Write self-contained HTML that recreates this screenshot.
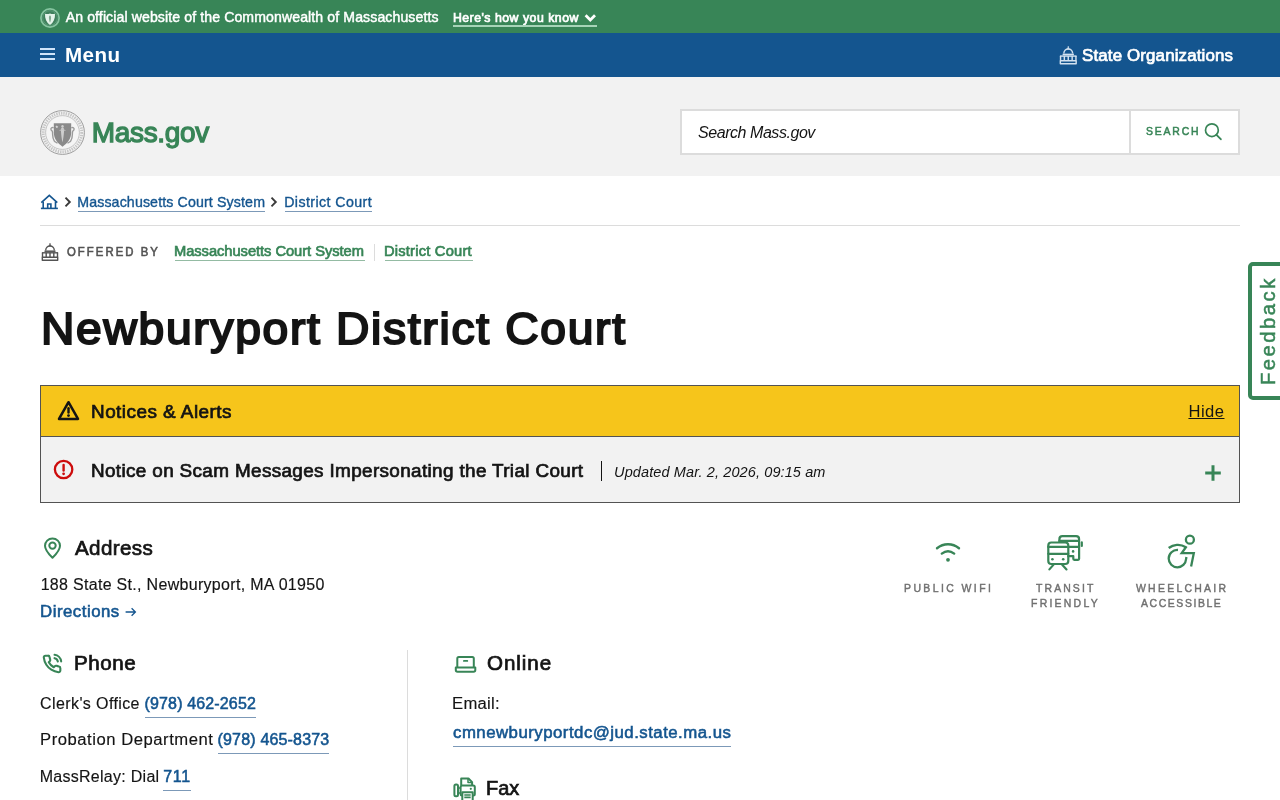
<!DOCTYPE html>
<html lang="en">
<head>
<meta charset="utf-8">
<title>Newburyport District Court | Mass.gov</title>
<style>
*{box-sizing:border-box}
html,body{margin:0;padding:0}
body{width:1280px;height:800px;overflow:hidden;background:#fff;font-family:"Liberation Sans",sans-serif;color:#141414}
#page{position:relative;width:1280px;height:800px;overflow:hidden;will-change:transform}
.t{position:absolute;white-space:nowrap;line-height:1;margin:0;padding:0;text-decoration:none;display:block}
.abs{position:absolute}
svg{position:absolute;overflow:visible}
.banner{position:absolute;left:0;top:0;width:1280px;height:33px;background:#388557}
.mainnav{position:absolute;left:0;top:33px;width:1280px;height:44px;background:#14558f}
.masthead{position:absolute;left:0;top:77px;width:1280px;height:99px;background:#f2f2f2}
.searchbox{position:absolute;left:680px;top:109px;width:560px;height:46px;background:#fff;border:2px solid #dcdcdc}
.searchdiv{position:absolute;left:1129px;top:109px;width:2px;height:46px;background:#dcdcdc}
.hr{position:absolute;left:40px;top:225px;width:1200px;height:1px;background:#dcdcdc}
.ul{position:absolute;height:1px}
.alerts{position:absolute;left:40px;top:385px;width:1200px;height:118px;border:1px solid #535353;background:#f2f2f2}
.alerts-head{position:absolute;left:0;top:0;width:1198px;height:51px;background:#f6c51b;border-bottom:1px solid #535353}
.vsep{position:absolute;width:1px}
.feedback{position:absolute;left:1248px;top:262px;width:40px;height:138px;border:4px solid #388557;border-radius:5px;background:#fff}
.feedback span{position:absolute;white-space:nowrap;line-height:1;transform-origin:0 0;transform:rotate(-90deg);color:#388557}
#official{left:65.7px;top:9.78px;font-size:14.1px;font-weight:400;color:#fff;letter-spacing:0.104px;-webkit-text-stroke:0.45px #fff;}
#heres{left:452.89px;top:11.65px;font-size:12.3px;font-weight:400;color:#fff;letter-spacing:0.499px;-webkit-text-stroke:0.7px #fff;}
#menu{left:64.99px;top:11.75px;font-size:20.6px;font-weight:700;color:#fff;letter-spacing:0.412px;}
#stateorg{left:1082.01px;top:14.65px;font-size:16.9px;font-weight:400;color:#fff;letter-spacing:0.145px;-webkit-text-stroke:0.7px #fff;}
#massgov{left:91.72px;top:42.35px;font-size:28px;font-weight:400;color:#388557;letter-spacing:-0.316px;-webkit-text-stroke:1.3px #388557;}
#searchph{left:698.06px;top:124.8px;font-size:16px;font-weight:400;color:#141414;letter-spacing:-0.452px;font-style:italic;}
#searchbtn{left:1145.76px;top:125.12px;font-size:11.6px;font-weight:400;color:#388557;letter-spacing:2.007px;-webkit-text-stroke:0.55px #388557;transform-origin:0 50%;transform:scaleX(0.9);}
#bc1{left:77.2px;top:194.82px;font-size:14.2px;font-weight:400;color:#14558f;letter-spacing:0.131px;-webkit-text-stroke:0.35px #14558f;}
#bc2{left:284.2px;top:194.82px;font-size:14.2px;font-weight:400;color:#14558f;letter-spacing:0.423px;-webkit-text-stroke:0.35px #14558f;}
#offby{left:67.13px;top:246.45px;font-size:12.2px;font-weight:400;color:#535353;letter-spacing:2.207px;-webkit-text-stroke:0.6px #535353;transform-origin:0 50%;transform:scaleX(0.93);}
#ob1{left:174.42px;top:244.43px;font-size:14px;font-weight:400;color:#388557;letter-spacing:-0.049px;-webkit-text-stroke:0.65px #388557;transform-origin:0 50%;transform:scaleX(1.05);}
#ob2{left:384.32px;top:244.43px;font-size:14px;font-weight:400;color:#388557;letter-spacing:0.192px;-webkit-text-stroke:0.65px #388557;transform-origin:0 50%;transform:scaleX(1.05);}
#h1{left:40.52px;top:306.5px;font-size:44px;font-weight:400;color:#141414;letter-spacing:1.61px;-webkit-text-stroke:2px #141414;transform-origin:0 50%;transform:scaleX(1.05);}
#notices{left:91.3px;top:402.9px;font-size:18px;font-weight:400;color:#141414;letter-spacing:0.454px;-webkit-text-stroke:0.7px #141414;transform-origin:0 50%;transform:scaleX(1.05);}
#hide{left:1188.45px;top:404.4px;font-size:16.6px;font-weight:400;color:#141414;letter-spacing:0.475px;text-decoration:underline;}
#alerttitle{left:91.3px;top:461.65px;font-size:18px;font-weight:400;color:#141414;letter-spacing:0.335px;-webkit-text-stroke:0.7px #141414;transform-origin:0 50%;transform:scaleX(1.05);}
#updated{left:614.12px;top:465px;font-size:14.5px;font-weight:400;color:#141414;letter-spacing:0.106px;font-style:italic;}
#address{left:74.62px;top:538.65px;font-size:19.6px;font-weight:400;color:#141414;letter-spacing:0.354px;-webkit-text-stroke:0.7px #141414;transform-origin:0 50%;transform:scaleX(1.05);}
#addrline{left:40.64px;top:576.92px;font-size:16px;font-weight:400;color:#141414;letter-spacing:0.305px;-webkit-text-stroke:0.15px #141414;}
#directions{left:40.26px;top:603.73px;font-size:16px;font-weight:400;color:#14558f;letter-spacing:0.483px;-webkit-text-stroke:0.55px #14558f;transform-origin:0 50%;transform:scaleX(1.05);}
#phone{left:73.99px;top:654.35px;font-size:19.6px;font-weight:400;color:#141414;letter-spacing:0.545px;-webkit-text-stroke:0.7px #141414;transform-origin:0 50%;transform:scaleX(1.05);}
#clerk{left:40.1px;top:695.92px;font-size:16px;font-weight:400;color:#141414;letter-spacing:0.391px;-webkit-text-stroke:0.15px #141414;}
#ph1{left:144.53px;top:695.73px;font-size:16px;font-weight:400;color:#14558f;letter-spacing:0.147px;-webkit-text-stroke:0.55px #14558f;}
#prob{left:39.7px;top:731.92px;font-size:16px;font-weight:400;color:#141414;letter-spacing:0.513px;-webkit-text-stroke:0.15px #141414;transform-origin:0 50%;transform:scaleX(1.04);}
#ph2{left:217.53px;top:731.73px;font-size:16px;font-weight:400;color:#14558f;letter-spacing:0.178px;-webkit-text-stroke:0.55px #14558f;}
#relay{left:39.66px;top:768.92px;font-size:16px;font-weight:400;color:#141414;letter-spacing:0.278px;-webkit-text-stroke:0.15px #141414;}
#ph3{left:163.13px;top:768.73px;font-size:16px;font-weight:400;color:#14558f;letter-spacing:0.788px;-webkit-text-stroke:0.55px #14558f;}
#online{left:486.93px;top:654.35px;font-size:19.6px;font-weight:400;color:#141414;letter-spacing:0.897px;-webkit-text-stroke:0.7px #141414;transform-origin:0 50%;transform:scaleX(1.05);}
#emaillbl{left:451.8px;top:695.92px;font-size:16px;font-weight:400;color:#141414;letter-spacing:0.287px;-webkit-text-stroke:0.15px #141414;transform-origin:0 50%;transform:scaleX(1.04);}
#email{left:452.8px;top:724.73px;font-size:16px;font-weight:400;color:#14558f;letter-spacing:0.455px;-webkit-text-stroke:0.55px #14558f;transform-origin:0 50%;transform:scaleX(1.05);}
#fax{left:486.22px;top:779.35px;font-size:19.6px;font-weight:400;color:#141414;letter-spacing:-0.049px;-webkit-text-stroke:0.7px #141414;transform-origin:0 50%;transform:scaleX(1.02);}
#wifi1{left:904.31px;top:582.17px;font-size:11.6px;font-weight:400;color:#707070;letter-spacing:2.69px;-webkit-text-stroke:0.45px #707070;transform-origin:0 50%;transform:scaleX(0.9);}
#tr1{left:1035.87px;top:582.17px;font-size:11.6px;font-weight:400;color:#707070;letter-spacing:2.348px;-webkit-text-stroke:0.45px #707070;transform-origin:0 50%;transform:scaleX(0.9);}
#tr2{left:1031.21px;top:597.38px;font-size:11.6px;font-weight:400;color:#707070;letter-spacing:2.515px;-webkit-text-stroke:0.45px #707070;transform-origin:0 50%;transform:scaleX(0.9);}
#wc1{left:1136.47px;top:582.17px;font-size:11.6px;font-weight:400;color:#707070;letter-spacing:2.524px;-webkit-text-stroke:0.45px #707070;transform-origin:0 50%;transform:scaleX(0.9);}
#wc2{left:1141.43px;top:597.38px;font-size:11.6px;font-weight:400;color:#707070;letter-spacing:1.764px;-webkit-text-stroke:0.45px #707070;transform-origin:0 50%;transform:scaleX(0.9);}
#fb{left:1258.15px;top:384.6px;font-size:20.3px;font-weight:400;color:#388557;letter-spacing:2.457px;-webkit-text-stroke:0.5px #388557;transform-origin:0 0;transform:rotate(-90deg);}
</style>
</head>
<body>
<div id="page">
<header>
  <div class="banner">
    <svg style="left:40px;top:8px" width="20" height="20" viewBox="0 0 20 20" aria-hidden="true" ><circle cx="10" cy="10" r="9.100" fill="#3f7f5c" stroke="#86c4a0" stroke-width="1.700"/><circle cx="10" cy="10" r="7.300" fill="none" stroke="#5da27c" stroke-width=".8"/><path d="M5 5.700c1.700.5 3.300.5 5-.3 1.700.8 3.300.8 5 .3.300 4.800-1.500 8.800-5 11.300C6.500 14.500 4.700 10.500 5 5.700z" fill="#e4f3ea"/><path d="M10 7.600c.9 0 1.200 1.600 1 3.200-.2 1.500-.5 3-1 3.900-.5-.9-.8-2.400-1-3.900-.2-1.600.1-3.200 1-3.200z" fill="#7fa890"/></svg>
    <span id="official" class="t">An official website of the Commonwealth of Massachusetts</span>
    <a id="heres" class="t" href="#">Here's how you know</a>
    <div class="ul" style="left:453px;top:25px;width:144px;height:2px;background:#a6d4b8"></div>
    <svg style="left:584px;top:13px" width="13" height="10" viewBox="0 0 13 10" aria-hidden="true" ><path d="M1.600 2.200L6.300 6.900L11 2.200" fill="none" stroke="#fff" stroke-width="2.800" stroke-linecap="butt"/></svg>
  </div>
  <nav class="mainnav" style="position:absolute">
    <svg style="left:40px;top:15px" width="15" height="12" viewBox="0 0 15 12" aria-hidden="true" ><path d="M0 0h15v2H0zM0 5h15v2H0zM0 10h15v2H0z" fill="#cfe4fa"/></svg>
    <span id="menu" class="t">Menu</span>
    <svg style="left:1059.3px;top:13.3px" width="18.5" height="18.5" viewBox="0 0 18 18" aria-hidden="true" ><g fill="none" stroke="#d3e2f0" stroke-width="1.400" stroke-linejoin="round"><path d="M9 0.200L9.700 3H8.300z" fill="#d3e2f0" stroke-width=".6"/><path d="M4.700 7.400c0-2.600 1.900-4.400 4.300-4.400s4.300 1.800 4.300 4.400"/><path d="M3.500 8.200h11" stroke-width="1.500"/><path d="M0.900 9.800h16.200"/><path d="M1.500 9.800v4.400M5.200 9.800v4.400M9 9.800v4.400M12.800 9.800v4.400M16.500 9.800v4.400"/><path d="M1.300 14.300h15.400v3h-15.400z"/></g></svg>
    <span id="stateorg" class="t">State Organizations</span>
  </nav>
  <div class="masthead">
    <svg style="left:40px;top:33px" width="45" height="45" viewBox="0 0 45 45" aria-hidden="true" ><circle cx="22.500" cy="22.500" r="21.900" fill="#f4f4f4" stroke="#9c9c9c" stroke-width="1"/><circle cx="22.500" cy="22.500" r="19.300" fill="none" stroke="#c6c6c6" stroke-width="3" stroke-dasharray="1.400 1"/><circle cx="22.500" cy="22.500" r="16.900" fill="#f5f5f5" stroke="#b8b8b8" stroke-width=".8"/><path d="M13.600 17.800c-1.500-.8-3 .2-2.600 1.700.3 1 1.300 1.200 1.500 2.500.3 3-.3 6 1.700 8.800.8 1.200 2.200 1.600 3.300 2.400M31.400 17.800c1.500-.8 3 .2 2.600 1.700-.3 1-1.300 1.200-1.500 2.500-.3 3 .3 6-1.700 8.800-.8 1.200-2.200 1.600-3.300 2.400" fill="none" stroke="#9a9a9a" stroke-width="1.400"/><path d="M13.800 13.200h17.400v9.300c0 6.500-4 10.700-8.700 14.200-4.700-3.500-8.700-7.700-8.700-14.200z" fill="#8a8a8a"/><path d="M22.500 17.300c1.300 0 1.700 2 1.500 4.500-.2 3-.7 7.500-1.500 10.700-.8-3.200-1.300-7.700-1.500-10.700-.2-2.500.2-4.500 1.500-4.500z" fill="#cfcfcf"/><circle cx="22.500" cy="16.300" r="1.200" fill="#cfcfcf"/><path d="M19.600 20.500l2.900-1 2.900 1" stroke="#c4c4c4" stroke-width="1" fill="none"/><path d="M16.800 15.200l.45 1.050 1.100.1-.85.750.25 1.100-.95-.6-.95.600.25-1.100-.85-.75 1.100-.1z" fill="#dedede"/></svg>
    <span id="massgov" class="t">Mass.gov</span>
  </div>
  <form class="searchbox" role="search"></form>
  <div class="searchdiv"></div>
  <span id="searchph" class="t">Search Mass.gov</span>
  <span id="searchbtn" class="t">SEARCH</span>
  <svg style="left:1204px;top:123px" width="18" height="18" viewBox="0 0 18 18" aria-hidden="true" ><circle cx="7.900" cy="7.200" r="6.400" fill="none" stroke="#388557" stroke-width="1.700"/><path d="M12.500 11.800L16.800 16.200" stroke="#388557" stroke-width="1.900" stroke-linecap="round"/></svg>
</header>
<main>
  <nav aria-label="Breadcrumb">
    <svg style="left:40px;top:193px" width="19" height="17" viewBox="0 0 19 17" aria-hidden="true" ><g fill="none" stroke="#14558f" stroke-width="1.600" stroke-linejoin="miter"><path d="M1.300 9.700L9.300 2.300L17.300 9.700"/><path d="M3.200 8.700v6.500M15.500 8.700v6.500"/><path d="M0.900 15.400h17"/><path d="M7.700 15v-4h3.200v4"/></g></svg>
    <svg style="left:63.9px;top:196px" width="8" height="12" viewBox="0 0 8 12" aria-hidden="true" ><path d="M1.500 1.700L5.800 6L1.500 10.300" fill="none" stroke="#3a3a3a" stroke-width="1.900"/></svg>
    <a id="bc1" class="t" href="#">Massachusetts Court System</a>
    <div class="ul" style="left:78px;top:211px;width:187px;background:#7c99b8"></div>
    <svg style="left:270.4px;top:196px" width="8" height="12" viewBox="0 0 8 12" aria-hidden="true" ><path d="M1.500 1.700L5.800 6L1.500 10.300" fill="none" stroke="#3a3a3a" stroke-width="1.900"/></svg>
    <a id="bc2" class="t" href="#">District Court</a>
    <div class="ul" style="left:285px;top:211px;width:87px;background:#7c99b8"></div>
  </nav>
  <div class="hr"></div>
  <div class="offered">
    <svg style="left:41.4px;top:243px" width="18" height="18" viewBox="0 0 18 18" aria-hidden="true" ><g fill="none" stroke="#535353" stroke-width="1.400" stroke-linejoin="round"><path d="M9 0.200L9.700 3H8.300z" fill="#535353" stroke-width=".6"/><path d="M4.700 7.400c0-2.600 1.900-4.400 4.300-4.400s4.300 1.800 4.300 4.400"/><path d="M3.500 8.200h11" stroke-width="1.500"/><path d="M0.900 9.800h16.200"/><path d="M1.500 9.800v4.400M5.200 9.800v4.400M9 9.800v4.400M12.800 9.800v4.400M16.500 9.800v4.400"/><path d="M1.300 14.300h15.400v3h-15.400z"/></g></svg>
    <span id="offby" class="t">OFFERED BY</span>
    <a id="ob1" class="t" href="#">Massachusetts Court System</a>
    <div class="ul" style="left:175px;top:260px;width:190px;background:#94bba3"></div>
    <div class="vsep" style="left:374px;top:244px;height:17px;background:#dcdcdc"></div>
    <a id="ob2" class="t" href="#">District Court</a>
    <div class="ul" style="left:385px;top:260px;width:88px;background:#94bba3"></div>
  </div>
  <h1 id="h1" class="t">Newburyport District Court</h1>
  <section class="alerts" aria-label="Notices and Alerts">
    <div class="alerts-head"></div>
  </section>
  <svg style="left:57px;top:400px" width="23" height="21" viewBox="0 0 23 21" aria-hidden="true" ><path d="M11.500 2.200L21 18.900H2z" fill="none" stroke="#141414" stroke-width="2.500" stroke-linejoin="round"/><path d="M11.500 8.200v4.300" stroke="#141414" stroke-width="2.400" stroke-linecap="round"/><circle cx="11.500" cy="15.600" r="1.400" fill="#141414"/></svg>
  <h2 id="notices" class="t">Notices &amp; Alerts</h2>
  <a id="hide" class="t" href="#">Hide</a>
  <svg style="left:53px;top:458.5px" width="21" height="21" viewBox="0 0 21 21" aria-hidden="true" ><circle cx="10.600" cy="10.500" r="8.700" fill="none" stroke="#cd0d0d" stroke-width="2.300"/><path d="M10.600 6v5.600" stroke="#cd0d0d" stroke-width="2.400" stroke-linecap="round"/><circle cx="10.600" cy="14.800" r="1.400" fill="#cd0d0d"/></svg>
  <span id="alerttitle" class="t">Notice on Scam Messages Impersonating the Trial Court</span>
  <div class="vsep" style="left:601px;top:461px;height:20px;background:#141414"></div>
  <span id="updated" class="t">Updated Mar. 2, 2026, 09:15 am</span>
  <svg style="left:1205px;top:464.5px" width="16" height="16" viewBox="0 0 16 16" aria-hidden="true" ><path d="M8 0.200v15.600M0.200 8h15.600" stroke="#388557" stroke-width="3" fill="none"/></svg>
  <section class="contact">
    <svg style="left:43px;top:537px" width="19" height="23" viewBox="0 0 19 23" aria-hidden="true" ><path d="M9.500 1.500c4.200 0 7.500 3.200 7.500 7.300 0 4.300-4 8.600-7.500 12C6 17.400 2 13.100 2 8.800c0-4.100 3.300-7.300 7.500-7.300z" fill="none" stroke="#388557" stroke-width="2" stroke-linejoin="round"/><circle cx="9.500" cy="8.600" r="3.200" fill="none" stroke="#388557" stroke-width="2"/></svg>
    <h2 id="address" class="t">Address</h2>
    <span id="addrline" class="t">188 State St., Newburyport, MA 01950</span>
    <a id="directions" class="t" href="#">Directions</a>
    <svg style="left:125px;top:607px" width="12" height="10" viewBox="0 0 12 10" aria-hidden="true" ><path d="M0.600 5h9.800M6.600 1.300L10.400 5L6.600 8.700" fill="none" stroke="#14558f" stroke-width="1.300"/></svg>
    <svg style="left:42.3px;top:654.3px" width="20" height="20" viewBox="0 0 24 24" aria-hidden="true" ><path d="M15.050 5A5 5 0 0 1 19 8.950M15.050 1A9 9 0 0 1 23 8.940m-1 7.980v3a2 2 0 0 1-2.180 2 19.790 19.790 0 0 1-8.630-3.070 19.500 19.500 0 0 1-6-6 19.790 19.790 0 0 1-3.070-8.670A2 2 0 0 1 4.110 2h3a2 2 0 0 1 2 1.720 12.840 12.840 0 0 0 .7 2.810 2 2 0 0 1-.45 2.110L8.090 9.910a16 16 0 0 0 6 6l1.270-1.270a2 2 0 0 1 2.110-.45 12.840 12.840 0 0 0 2.810.7A2 2 0 0 1 22 16.920z" fill="none" stroke="#388557" stroke-width="2.500" stroke-linecap="round" stroke-linejoin="round"/></svg>
    <h2 id="phone" class="t">Phone</h2>
    <span id="clerk" class="t">Clerk's Office</span>
    <a id="ph1" class="t" href="#">(978) 462-2652</a>
    <div class="ul" style="left:145px;top:717px;width:111px;background:#7c99b8"></div>
    <span id="prob" class="t">Probation Department</span>
    <a id="ph2" class="t" href="#">(978) 465-8373</a>
    <div class="ul" style="left:218px;top:753px;width:111px;background:#7c99b8"></div>
    <span id="relay" class="t">MassRelay: Dial</span>
    <a id="ph3" class="t" href="#">711</a>
    <div class="ul" style="left:163px;top:790px;width:28px;background:#7c99b8"></div>
    <div class="vsep" style="left:407px;top:650px;height:150px;background:#dcdcdc"></div>
    <svg style="left:454px;top:655px" width="23" height="19" viewBox="0 0 23 19" aria-hidden="true" ><g fill="none" stroke="#388557" stroke-width="2" stroke-linejoin="round"><path d="M3.300 12.500V3.500a1.500 1.500 0 0 1 1.500-1.500h13.500a1.500 1.500 0 0 1 1.500 1.500v9"/><path d="M1.800 12.500h19.500v2.500c0 1-.8 1.700-1.700 1.700H3.500c-1 0-1.700-.8-1.700-1.700z"/><path d="M9.900 5.900h3.400" stroke-linecap="round" stroke-width="1.800"/></g></svg>
    <h2 id="online" class="t">Online</h2>
    <span id="emaillbl" class="t">Email:</span>
    <a id="email" class="t" href="#">cmnewburyportdc@jud.state.ma.us</a>
    <div class="ul" style="left:453px;top:746px;width:278px;background:#7c99b8"></div>
    <svg style="left:452px;top:776px" width="26" height="24" viewBox="0 0 26 24" aria-hidden="true" ><g fill="none" stroke="#388557" stroke-width="2" stroke-linejoin="round"><path d="M9.200 9V2.500h7.300l3.600 3.600V9"/><path d="M16 2.500v4h4" stroke-width="1.500"/><rect x="8.600" y="9.500" width="14.200" height="10" rx="1.500"/><rect x="2.400" y="8.400" width="3.600" height="11.800" rx="1.500"/><path d="M6 12h2.600M6 17h2.600" stroke-width="1.500"/><path d="M10.300 16.200h10.400V25H10.300z" fill="#fff"/><path d="M12.300 19h6.400M12.300 21.400h6.400" stroke-width="1.600"/></g><circle cx="18.800" cy="12.800" r="1.100" fill="#388557"/></svg>
    <h2 id="fax" class="t">Fax</h2>
  </section>
  <section class="amenities">
    <svg style="left:935px;top:541px" width="26" height="22" viewBox="0 0 26 22" aria-hidden="true" ><g fill="none" stroke="#388557" stroke-width="2.400" stroke-linecap="round"><path d="M2 7.200c6.500-5.300 15.500-5.300 22 0"/><path d="M6.800 12.600c3.800-3 8.600-3 12.400 0"/></g><circle cx="13" cy="18.800" r="1.900" fill="#388557"/></svg>
    <span id="wifi1" class="t">PUBLIC WIFI</span>
    <svg style="left:1045px;top:533px" width="40" height="40" viewBox="0 0 40 40" aria-hidden="true" ><g fill="none" stroke="#388557" stroke-width="2.200" stroke-linejoin="round" stroke-linecap="round"><path d="M14.400 8.500V6.200c0-1.700 1.300-3 3-3h13.700c1.700 0 3 1.300 3 3v19.600c0 .6-.4 1-1 1h-3.800c-.6 0-1-.4-1-1v-2.600h-5"/><path d="M14.400 7.900h19"/><path d="M23.600 13.900h10.500"/><path d="M36.800 9.400v3.600"/><rect x="3.300" y="9.500" width="20" height="21.500" rx="3"/><path d="M3.300 13.900h20M3.300 20.800h20"/><path d="M8.600 31.600L4.400 36.400M17 31.600l4.500 4.800"/></g><circle cx="7.400" cy="26.200" r="1.300" fill="#388557"/><circle cx="18.200" cy="26.200" r="1.300" fill="#388557"/><circle cx="28.100" cy="18.400" r="1.300" fill="#388557"/></svg>
    <span id="tr1" class="t">TRANSIT</span>
    <span id="tr2" class="t">FRIENDLY</span>
    <svg style="left:1165px;top:533px" width="32" height="36" viewBox="0 0 32 36" aria-hidden="true" ><g fill="none" stroke="#388557" stroke-width="2.300" stroke-linecap="butt" stroke-linejoin="miter"><circle cx="24.900" cy="6.700" r="4"/><path d="M3.700 15c4.500-3.600 11.500-4.600 17.200-.8l-4.200 6h12.100l-2.700 13.300"/><path d="M13 17c-5-.4-9.300 3.600-9.300 8.600 0 4.800 3.900 8.700 8.700 8.700 4.600 0 8.400-3.600 8.700-8.300l.3-2"/></g></svg>
    <span id="wc1" class="t">WHEELCHAIR</span>
    <span id="wc2" class="t">ACCESSIBLE</span>
  </section>
</main>
<aside class="feedback"></aside>
<a id="fb" class="t" href="#">Feedback</a>
</div>
</body>
</html>
